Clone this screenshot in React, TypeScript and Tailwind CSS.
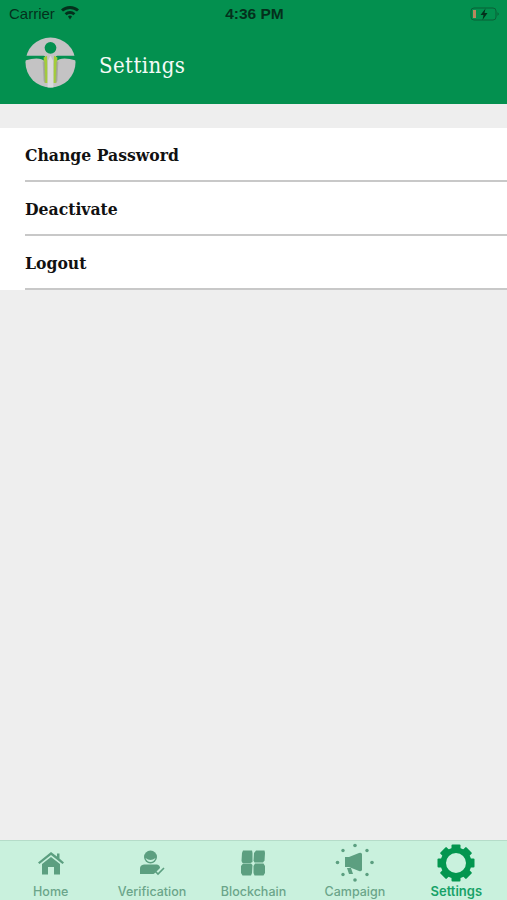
const rows = ["Change Password", "Deactivate", "Logout"];

function Logo() {
  return (
    <svg width="51" height="51" viewBox="0 0 52 52">
      <circle cx="26" cy="26" r="25.5" fill="#c4c3c4" />
      <path d="M0 19 H19 Q21 19 21 22 L20.5 25 Q15 19.5 0 24 Z" fill="#03904f" />
      <path d="M52 19 H33 Q31 19 31 22 L31.5 25 Q37 19.5 52 24 Z" fill="#03904f" />
      <path d="M19 21 L22.5 19 L23 47 L20 47 Z" fill="#a3cd3a" />
      <path d="M33 21 L29.5 19 L29 47 L32 47 Z" fill="#a3cd3a" />
      <path d="M23.5 24 L26 19 L28.5 24 L29 51.5 H23 Z" fill="#dbdadb" />
      <path d="M18 25 L20 25 L21 47 L19 45 Z" fill="#9d9d9d" opacity="0.7" />
      <path d="M34 25 L32 25 L31 47 L33 45 Z" fill="#9d9d9d" opacity="0.7" />
      <circle cx="26" cy="11" r="6" fill="#03904f" />
    </svg>
  );
}

function WifiIcon() {
  return (
    <svg width="18" height="14" viewBox="0 0 18 14" fill="#04301c" className="-mt-[2px]">
      <path d="M9 0 Q14.5 0 18 3.5 L16 5.6 Q13 3 9 3 Q5 3 2 5.6 L0 3.5 Q3.5 0 9 0 Z" />
      <path d="M9 5 Q12 5 14.4 7.2 L12.4 9.2 Q11 8 9 8 Q7 8 5.6 9.2 L3.6 7.2 Q6 5 9 5 Z" />
      <path d="M9 9.6 Q10.2 9.6 11 10.5 L9 13.5 L7 10.5 Q7.8 9.6 9 9.6 Z" />
    </svg>
  );
}

function HomeIcon() {
  return (
    <svg width="26" height="24" viewBox="0 0 26 24" fill="#5c9f80">
      <path d="M13 1 L19 5.5 V2.5 H21.5 V7.5 L26 11.5 L24.5 13 L13 4 L1.5 13 L0 11.5 Z" />
      <path d="M4 13 L13 6 L22 13 V23.5 H16 V16 H10 V23.5 H4 Z" />
    </svg>
  );
}

function PersonIcon() {
  return (
    <svg width="26" height="26" viewBox="0 0 26 26" fill="#5c9f80">
      <circle cx="11.5" cy="7" r="6.5" />
      <path d="M6.5 8 Q11.5 12 16.5 8 Q15 12 11.5 12 Q8 12 6.5 8 Z" fill="#c9f1dd" />
      <path d="M1 24 V18.5 Q1 15 5 14.5 H18 Q21 15 21 18 L16 23 L14.5 24 Z" />
      <path d="M16.5 21.5 L19 24 L25 18" fill="none" stroke="#5c9f80" strokeWidth="1.6" />
    </svg>
  );
}

function BlocksIcon() {
  return (
    <svg width="24" height="26" viewBox="0 0 24 26" fill="#5c9f80">
      <path d="M2 0.5 H11 L11.5 3 V12 L9.5 13 H1.5 L0.5 11 L1 3 Z" />
      <path d="M15 0.5 H23.5 L24 3 L23.5 10.5 L22 12.5 H13.5 L12.5 10.5 L13 3 Z" />
      <path d="M2 13.5 H10 L11.5 15 L11 23 L10 25.5 H1.5 L0 23 V16 Z" />
      <path d="M14 13.5 H22.5 L24 16 V23 L22.5 25.5 H13.5 L12.5 23 V16 Z" />
    </svg>
  );
}

function CampaignIcon() {
  return (
    <svg width="40" height="40" viewBox="0 0 40 40" fill="#5c9f80">
      <path d="M10 14 H14 L24 10 Q26 9 27 11 V27 Q26 29 24 28 L14 24 H10 Z" />
      <path d="M12 25 H16 L18 31 H14 Z" />
      <circle cx="20" cy="2.5" r="1.8" />
      <circle cx="20" cy="37" r="1.8" />
      <circle cx="2.5" cy="19.5" r="1.8" />
      <circle cx="37" cy="19.5" r="1.8" />
      <circle cx="8" cy="7.5" r="1.7" />
      <circle cx="32" cy="7.5" r="1.7" />
      <circle cx="8" cy="31.5" r="1.7" />
      <circle cx="32" cy="31.5" r="1.7" />
    </svg>
  );
}

function GearIcon() {
  const teeth = [0, 45, 90, 135, 180, 225, 270, 315];
  return (
    <svg width="38" height="38" viewBox="0 0 38 38" fill="#03964f">
      {teeth.map((a) => (
        <rect key={a} x="14.5" y="0.5" width="9" height="7" rx="1" transform={`rotate(${a} 19 19)`} />
      ))}
      <circle cx="19" cy="19" r="12.75" fill="none" stroke="#03964f" strokeWidth="5.5" />
    </svg>
  );
}

const tabs = [
  { label: "Home", icon: <HomeIcon />, active: false },
  { label: "Verification", icon: <PersonIcon />, active: false },
  { label: "Blockchain", icon: <BlocksIcon />, active: false },
  { label: "Campaign", icon: <CampaignIcon />, active: false },
  { label: "Settings", icon: <GearIcon />, active: true },
];

export default function App() {
  return (
    <div className="w-[507px] h-[900px] flex flex-col bg-[#eeeeee] overflow-hidden">
      <header className="h-[104px] bg-[#03904f] shrink-0">
        <div className="h-[28px] grid grid-cols-3 items-center pl-[9px] pr-[7px] font-['Liberation_Sans',sans-serif]">
          <div className="flex items-center gap-[6px] text-[15px] text-[#04301c]">
            <span>Carrier</span>
            <WifiIcon />
          </div>
          <div className="text-center text-[15.5px] font-bold text-[#04301c] whitespace-nowrap">4:36 PM</div>
          <div className="flex justify-end">
            <svg width="30" height="16" viewBox="0 0 30 16">
              <rect x="1" y="2" width="25" height="12" rx="3" fill="none" stroke="#0b5f37" strokeWidth="1" />
              <rect x="3" y="4" width="3" height="8" fill="#b9875f" />
              <path d="M27.5 6 L29 8 L27.5 10 Z" fill="#0b5f37" />
              <path d="M15.5 2.5 L10.5 9 H13.5 L12.5 14 L17.5 7 H14.5 Z" fill="#04301c" />
            </svg>
          </div>
        </div>
        <div className="flex items-center pl-[25px] mt-[9px]">
          <Logo />
          <span className="ml-[23px] mt-[6px] text-[22px] tracking-[0.4px] text-[#f4fbf7] font-['DejaVu_Serif',serif] [font-stretch:condensed]">
            Settings
          </span>
        </div>
      </header>

      <ul className="mt-[24px] bg-white">
        {rows.map((row) => (
          <li key={row} className="pl-[25px]">
            <div className="h-[54px] flex items-center pt-[3px] border-b-[2px] border-[#c8c8c8] text-[17.4px] font-bold text-[#111] font-['DejaVu_Serif',serif] [font-stretch:condensed]">
              {row}
            </div>
          </li>
        ))}
      </ul>

      <nav className="mt-auto h-[60px] bg-[#c9f1dd] border-t border-[#b5dcc9] grid grid-cols-5 shrink-0">
        {tabs.map((tab) => (
          <div key={tab.label} className="flex flex-col items-center">
            <div className="h-[43px] flex items-center justify-center">{tab.icon}</div>
            <span
              className={`leading-[14px] font-['Inter',sans-serif] ${
                tab.active ? "text-[13px] font-semibold text-[#17a268]" : "pt-[1px] text-[12.5px] font-medium text-[#6ba58a]"
              }`}
            >
              {tab.label}
            </span>
          </div>
        ))}
      </nav>
    </div>
  );
}
